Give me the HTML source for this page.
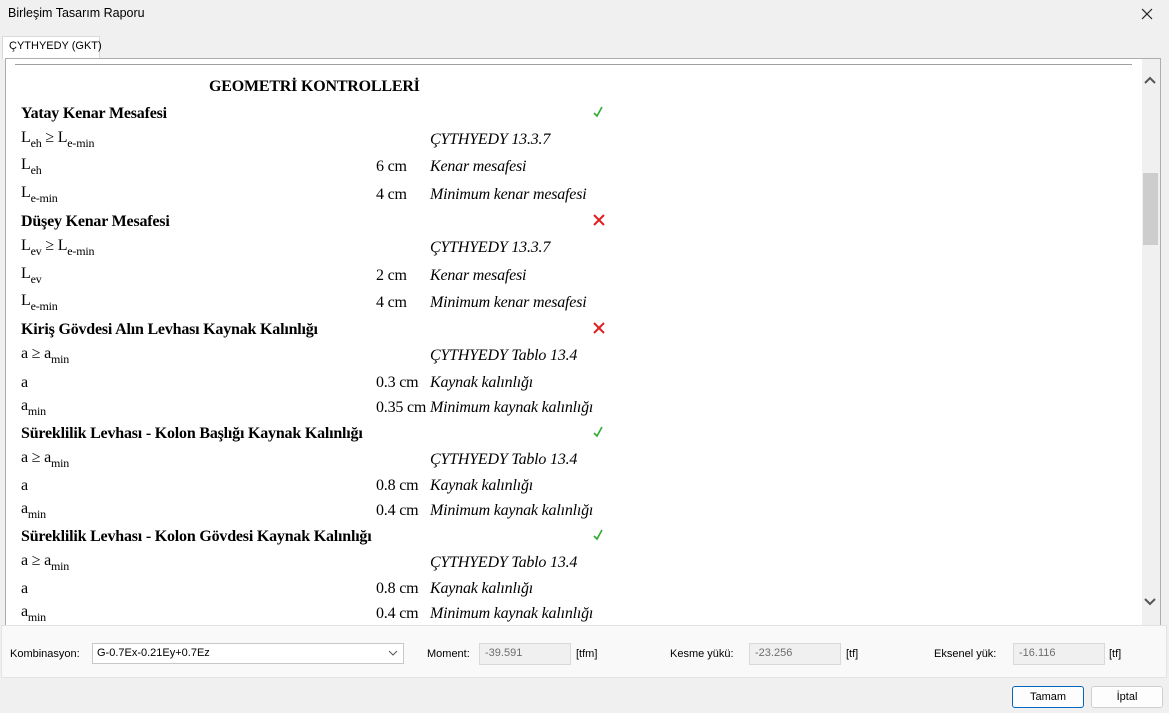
<!DOCTYPE html>
<html><head><meta charset="utf-8"><style>
*{margin:0;padding:0;box-sizing:border-box}
body{width:1169px;height:713px;background:#f0f0f0;font-family:"Segoe UI","Liberation Sans",sans-serif;font-size:12px;color:#000;position:relative;overflow:hidden}
.a{position:absolute;white-space:nowrap}
.t{font-family:"Liberation Serif",serif;font-size:16px;line-height:18px;letter-spacing:-0.2px;margin-top:2px}
.b{font-weight:bold}
.i{font-style:italic}
sub{font-size:12px;vertical-align:-5px;line-height:0}
.s{font-size:11px}
.box{position:absolute;background:#f0f0f0;border:1px solid #d9d9d9;color:#6d6d6d;font-size:11px;padding:3px 5px}
</style></head><body>
<div class="a" style="left:8px;top:6px;font-size:12.5px">Birleşim Tasarım Raporu</div>
<svg class="a" style="left:1141px;top:8px" width="12" height="12"><path d="M1 1 L11 11 M11 1 L1 11" stroke="#222" stroke-width="1.2" fill="none"/></svg>
<div class="a" style="left:2px;top:36px;width:98px;height:23px;background:#fff;border:1px solid #d9d9d9;border-bottom:none"></div>
<div class="a s" style="left:9px;top:40px">ÇYTHYEDY (GKT)</div>
<div class="a" style="left:5px;top:58px;width:1156px;height:568px;background:#fff;border:1px solid #adadad"></div>
<div class="a" style="left:15px;top:64px;width:1117px;height:1px;background:#a0a0a0"></div>
<div class="a" style="left:1142px;top:59px;width:18px;height:566px;background:#f0f0f0"></div>
<div class="a" style="left:1143px;top:173px;width:15px;height:72px;background:#cdcdcd"></div>
<svg class="a" style="left:1144px;top:76px" width="12" height="10"><path d="M1 7 L6 2 L11 7" stroke="#555" stroke-width="2" fill="none"/></svg>
<svg class="a" style="left:1144px;top:596px" width="12" height="10"><path d="M1 3 L6 8 L11 3" stroke="#555" stroke-width="2" fill="none"/></svg>

<div class="a t b" style="left:209px;top:76px">GEOMETRİ KONTROLLERİ</div>

<div class="a t b" style="left:21px;top:103px">Yatay Kenar Mesafesi</div>
<div class="a t" style="left:21px;top:127px">L<sub>eh</sub> ≥ L<sub>e-min</sub></div>
<div class="a t i" style="left:430px;top:129px">ÇYTHYEDY 13.3.7</div>
<div class="a t" style="left:21px;top:154px">L<sub>eh</sub></div>
<div class="a t" style="left:376px;top:156px">6 cm</div><div class="a t i" style="left:430px;top:156px">Kenar mesafesi</div>
<div class="a t" style="left:21px;top:182px">L<sub>e-min</sub></div>
<div class="a t" style="left:376px;top:184px">4 cm</div><div class="a t i" style="left:430px;top:184px">Minimum kenar mesafesi</div>

<div class="a t b" style="left:21px;top:211px">Düşey Kenar Mesafesi</div>
<div class="a t" style="left:21px;top:235px">L<sub>ev</sub> ≥ L<sub>e-min</sub></div>
<div class="a t i" style="left:430px;top:237px">ÇYTHYEDY 13.3.7</div>
<div class="a t" style="left:21px;top:263px">L<sub>ev</sub></div>
<div class="a t" style="left:376px;top:265px">2 cm</div><div class="a t i" style="left:430px;top:265px">Kenar mesafesi</div>
<div class="a t" style="left:21px;top:290px">L<sub>e-min</sub></div>
<div class="a t" style="left:376px;top:292px">4 cm</div><div class="a t i" style="left:430px;top:292px">Minimum kenar mesafesi</div>

<div class="a t b" style="left:21px;top:319px">Kiriş Gövdesi Alın Levhası Kaynak Kalınlığı</div>
<div class="a t" style="left:21px;top:343px">a ≥ a<sub>min</sub></div>
<div class="a t i" style="left:430px;top:345px">ÇYTHYEDY Tablo 13.4</div>
<div class="a t" style="left:21px;top:372px">a</div>
<div class="a t" style="left:376px;top:372px">0.3 cm</div><div class="a t i" style="left:430px;top:372px">Kaynak kalınlığı</div>
<div class="a t" style="left:21px;top:395px">a<sub>min</sub></div>
<div class="a t" style="left:376px;top:397px">0.35 cm</div><div class="a t i" style="left:430px;top:397px">Minimum kaynak kalınlığı</div>

<div class="a t b" style="left:21px;top:423px">Süreklilik Levhası - Kolon Başlığı Kaynak Kalınlığı</div>
<div class="a t" style="left:21px;top:447px">a ≥ a<sub>min</sub></div>
<div class="a t i" style="left:430px;top:449px">ÇYTHYEDY Tablo 13.4</div>
<div class="a t" style="left:21px;top:475px">a</div>
<div class="a t" style="left:376px;top:475px">0.8 cm</div><div class="a t i" style="left:430px;top:475px">Kaynak kalınlığı</div>
<div class="a t" style="left:21px;top:498px">a<sub>min</sub></div>
<div class="a t" style="left:376px;top:500px">0.4 cm</div><div class="a t i" style="left:430px;top:500px">Minimum kaynak kalınlığı</div>

<div class="a t b" style="left:21px;top:526px">Süreklilik Levhası - Kolon Gövdesi Kaynak Kalınlığı</div>
<div class="a t" style="left:21px;top:550px">a ≥ a<sub>min</sub></div>
<div class="a t i" style="left:430px;top:552px">ÇYTHYEDY Tablo 13.4</div>
<div class="a t" style="left:21px;top:578px">a</div>
<div class="a t" style="left:376px;top:578px">0.8 cm</div><div class="a t i" style="left:430px;top:578px">Kaynak kalınlığı</div>
<div class="a t" style="left:21px;top:601px">a<sub>min</sub></div>
<div class="a t" style="left:376px;top:603px">0.4 cm</div><div class="a t i" style="left:430px;top:603px">Minimum kaynak kalınlığı</div>

<svg class="a" style="left:592px;top:106px" width="12" height="12"><path d="M2 7 L5 10 L10 1" stroke="#2eaa2e" stroke-width="1.6" fill="none"/></svg>
<svg class="a" style="left:592px;top:426px" width="12" height="12"><path d="M2 7 L5 10 L10 1" stroke="#2eaa2e" stroke-width="1.6" fill="none"/></svg>
<svg class="a" style="left:592px;top:529px" width="12" height="12"><path d="M2 7 L5 10 L10 1" stroke="#2eaa2e" stroke-width="1.6" fill="none"/></svg>
<svg class="a" style="left:592px;top:213px" width="14" height="14"><path d="M2 2 L12 12 M12 2 L2 12" stroke="#e02020" stroke-width="2" fill="none"/></svg>
<svg class="a" style="left:592px;top:321px" width="14" height="14"><path d="M2 2 L12 12 M12 2 L2 12" stroke="#e02020" stroke-width="2" fill="none"/></svg>

<div class="a" style="left:1px;top:625px;width:1166px;height:53px;background:#f9f9f9;border:1px solid #e3e3e3"></div>
<div class="a s" style="left:10px;top:648px">Kombinasyon:</div>
<div class="a" style="left:92px;top:643px;width:312px;height:21px;background:#fff;border:1px solid #c8c8c8"></div>
<div class="a s" style="left:97px;top:647px">G-0.7Ex-0.21Ey+0.7Ez</div>
<svg class="a" style="left:388px;top:650px" width="10" height="7"><path d="M1 1 L5 5 L9 1" stroke="#555" fill="none"/></svg>
<div class="a s" style="left:427px;top:648px">Moment:</div>
<div class="box" style="left:479px;top:643px;width:92px;height:22px">-39.591</div>
<div class="a s" style="left:576px;top:648px">[tfm]</div>
<div class="a s" style="left:670px;top:648px">Kesme yükü:</div>
<div class="box" style="left:749px;top:643px;width:92px;height:22px">-23.256</div>
<div class="a s" style="left:846px;top:648px">[tf]</div>
<div class="a s" style="left:934px;top:648px">Eksenel yük:</div>
<div class="box" style="left:1013px;top:643px;width:92px;height:22px">-16.116</div>
<div class="a s" style="left:1109px;top:648px">[tf]</div>

<div class="a" style="left:1012px;top:686px;width:72px;height:22px;background:#fdfdfd;border:1px solid #0067c0;border-radius:3px;text-align:center;line-height:20px;font-size:11px">Tamam</div>
<div class="a" style="left:1091px;top:686px;width:72px;height:22px;background:#fdfdfd;border:1px solid #cfcfcf;border-radius:3px;text-align:center;line-height:20px;font-size:11px">İptal</div>
</body></html>
